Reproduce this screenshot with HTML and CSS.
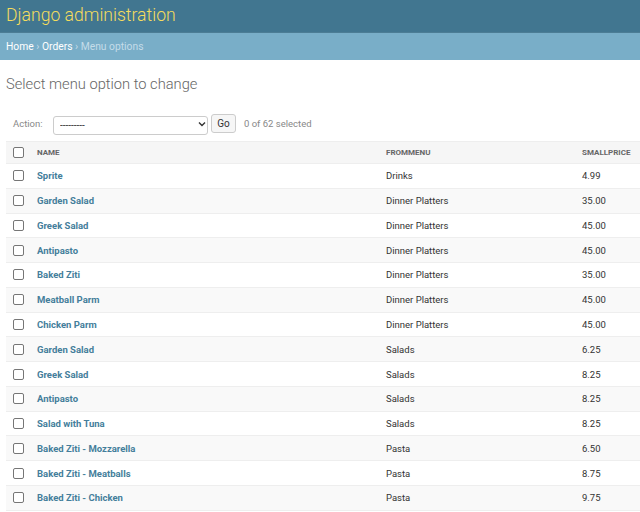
FILE: index.html
```html
<!DOCTYPE html>
<html>
<head>
<meta charset="utf-8">
<link rel="stylesheet" href="styles.css">
</head>
<body>
<header class="header"><span class="branding">Django administration</span></header>
<nav class="breadcrumbs"><a href="#">Home</a> › <a href="#">Orders</a> › <span class="current">Menu options</span></nav>
<main class="content">
  <h1 class="title">Select menu option to change</h1>
  <div class="actions">
    <label class="action-label">Action:</label>
    <div class="select-wrap">
      <select class="select"><option>---------</option></select>
      <svg class="chevron" width="8" height="6" viewBox="0 0 8 6"><path d="M1 1.5 L4 4.5 L7 1.5" fill="none" stroke="#333" stroke-width="1.4"/></svg>
    </div>
    <button class="go">Go</button>
    <span class="counter">0 of 62 selected</span>
  </div>
  <table class="results">
    <colgroup><col class="c-check"><col class="c-name"><col class="c-menu"><col class="c-price"></colgroup>
    <thead>
      <tr><th><span class="cb"></span></th><th>Name</th><th>Frommenu</th><th>Smallprice</th></tr>
    </thead>
    <tbody>
      <tr><td><span class="cb"></span></td><td class="name"><a href="#">Sprite</a></td><td>Drinks</td><td>4.99</td></tr>
      <tr><td><span class="cb"></span></td><td class="name"><a href="#">Garden Salad</a></td><td>Dinner Platters</td><td>35.00</td></tr>
      <tr><td><span class="cb"></span></td><td class="name"><a href="#">Greek Salad</a></td><td>Dinner Platters</td><td>45.00</td></tr>
      <tr><td><span class="cb"></span></td><td class="name"><a href="#">Antipasto</a></td><td>Dinner Platters</td><td>45.00</td></tr>
      <tr><td><span class="cb"></span></td><td class="name"><a href="#">Baked Ziti</a></td><td>Dinner Platters</td><td>35.00</td></tr>
      <tr><td><span class="cb"></span></td><td class="name"><a href="#">Meatball Parm</a></td><td>Dinner Platters</td><td>45.00</td></tr>
      <tr><td><span class="cb"></span></td><td class="name"><a href="#">Chicken Parm</a></td><td>Dinner Platters</td><td>45.00</td></tr>
      <tr><td><span class="cb"></span></td><td class="name"><a href="#">Garden Salad</a></td><td>Salads</td><td>6.25</td></tr>
      <tr><td><span class="cb"></span></td><td class="name"><a href="#">Greek Salad</a></td><td>Salads</td><td>8.25</td></tr>
      <tr><td><span class="cb"></span></td><td class="name"><a href="#">Antipasto</a></td><td>Salads</td><td>8.25</td></tr>
      <tr><td><span class="cb"></span></td><td class="name"><a href="#">Salad with Tuna</a></td><td>Salads</td><td>8.25</td></tr>
      <tr><td><span class="cb"></span></td><td class="name"><a href="#">Baked Ziti - Mozzarella</a></td><td>Pasta</td><td>6.50</td></tr>
      <tr><td><span class="cb"></span></td><td class="name"><a href="#">Baked Ziti - Meatballs</a></td><td>Pasta</td><td>8.75</td></tr>
      <tr><td><span class="cb"></span></td><td class="name"><a href="#">Baked Ziti - Chicken</a></td><td>Pasta</td><td>9.75</td></tr>
    </tbody>
  </table>
</main>
</body>
</html>
```
FILE: styles.css
```css
html, body {
  margin: 0;
  padding: 0;
  background: #fff;
  font-family: Roboto, "Liberation Sans", sans-serif;
  color: #333;
  overflow: hidden;
}
.header {
  height: 33px;
  box-sizing: border-box;
  background: #417690;
  padding: 4px 0 0 6px;
  border-bottom: 1px solid #4c7d95;
}
.branding {
  font-size: 17.6px;
  font-weight: 300;
  color: #f5dd5d;
  line-height: 22px;
}
.breadcrumbs {
  height: 27px;
  box-sizing: border-box;
  background: #79aec8;
  padding: 7px 6px 0;
  font-size: 10.3px;
  line-height: 13px;
  color: #c4dce8;
}
.breadcrumbs a {
  color: #fff;
  text-decoration: none;
}
.breadcrumbs .current {
  color: #c4dce8;
}
.content {
  padding: 15px 0 0 6px;
}
.title {
  margin: 0;
  font-size: 14.7px;
  font-weight: 300;
  color: #666;
  line-height: 18px;
}
.actions {
  display: flex;
  align-items: center;
  height: 19px;
  margin-top: 21px;
  padding-left: 7px;
}
.action-label {
  font-size: 9.5px;
  color: #888;
  width: 40px;
}
.select-wrap {
  position: relative;
  width: 155px;
  height: 19px;
}
.select {
  appearance: none;
  -webkit-appearance: none;
  width: 155px;
  height: 19px;
  box-sizing: border-box;
  border: 1px solid #ccc;
  border-radius: 3px;
  background: #fff;
  font-family: Roboto, "Liberation Sans", sans-serif;
  font-size: 10px;
  color: #333;
  padding: 0 0 0 6px;
  margin: 0;
}
.chevron {
  position: absolute;
  right: 2px;
  top: 6.5px;
}
.go {
  margin: 0 0 0 3px;
  width: 25px;
  height: 19px;
  box-sizing: border-box;
  border: 1px solid #ccc;
  border-radius: 3px;
  background: #f6f6f6;
  font-family: Roboto, "Liberation Sans", sans-serif;
  font-size: 10px;
  color: #333;
  padding: 0;
}
.counter {
  margin-left: 8px;
  font-size: 9.5px;
  color: #888;
}
.results {
  margin-top: 8px;
  width: 634px;
  table-layout: fixed;
  border-collapse: collapse;
}
.c-check { width: 24px; }
.c-name { width: 349px; }
.c-menu { width: 196px; }
.c-price { width: 65px; }
.results th {
  height: 21px;
  background: #f6f6f6;
  border-top: 1px solid #eee;
  border-bottom: 1px solid #eee;
  text-align: left;
  font-size: 8px;
  font-weight: 700;
  text-transform: uppercase;
  color: #666;
  padding: 0 0 0 7px;
  white-space: nowrap;
}
.results td {
  height: 23.77px;
  border-bottom: 1px solid #eee;
  padding: 0 0 0 7px;
  font-size: 9.5px;
  color: #333;
  white-space: nowrap;
}
.results tbody tr:nth-child(even) td {
  background: #f9f9f9;
}
.results td.name a {
  color: #447e9b;
  font-weight: 700;
  text-decoration: none;
}
.cb {
  display: block;
  width: 9px;
  height: 9px;
  border: 1px solid #767676;
  border-radius: 2px;
  background: #fff;
}
```
